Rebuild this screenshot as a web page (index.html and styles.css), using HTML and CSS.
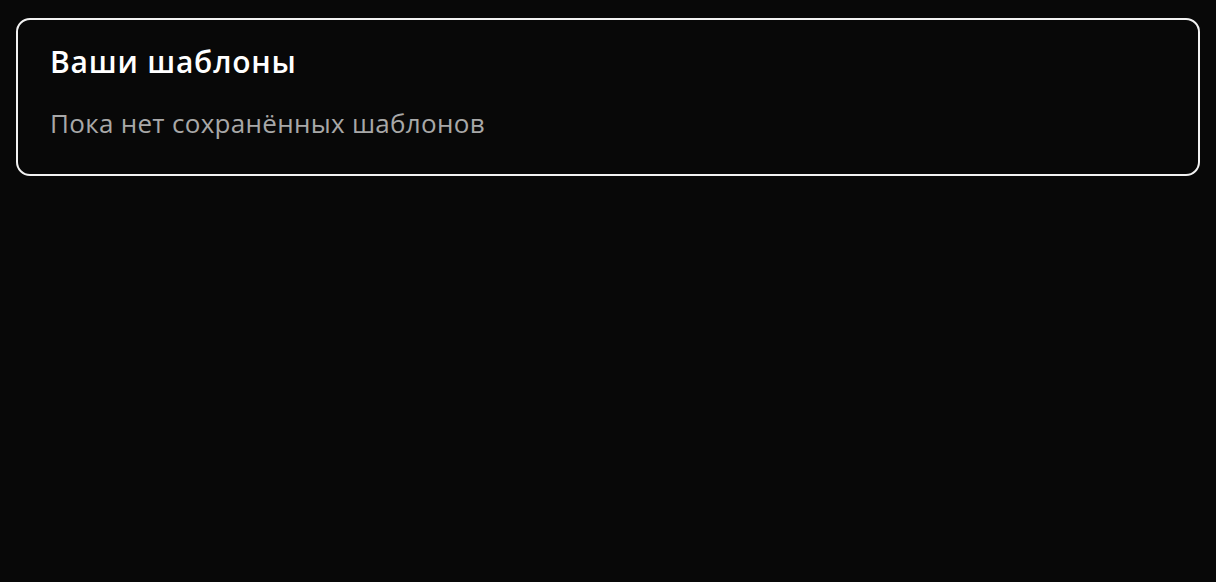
FILE: index.html
```html
<!DOCTYPE html>
<html lang="ru">
<head>
<meta charset="utf-8">
<link rel="stylesheet" href="styles.css">
</head>
<body>
<main class="page">
  <section class="card">
    <h2 class="card-title">Ваши шаблоны</h2>
    <p class="card-empty">Пока нет сохранённых шаблонов</p>
  </section>
</main>
</body>
</html>
```

FILE: styles.css
```css
html, body {
  margin: 0;
  padding: 0;
  background: #080808;
  height: 100%;
}
body {
  font-family: "Open Sans", "Noto Sans", sans-serif;
  color: #fff;
}
.page {
  padding: 18px 16px;
}
.card {
  border: 2px solid #f2f2f2;
  border-radius: 14px;
  padding: 24px 32px 35px;
  background: #080808;
}
.card-title {
  margin: 0;
  font-size: 30px;
  font-weight: 600;
  line-height: 36px;
  letter-spacing: 0.8px;
}
.card-empty {
  margin: 27px 0 0;
  font-size: 26px;
  line-height: 32px;
  letter-spacing: 0.3px;
  color: #a8a8a8;
}
```
